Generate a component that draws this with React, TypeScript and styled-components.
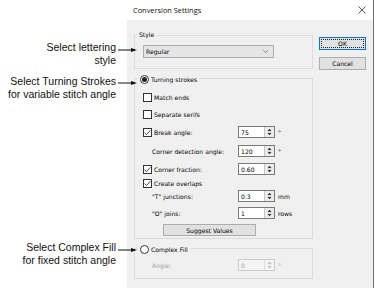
import React from "react";
import styled, { createGlobalStyle } from "styled-components";

const GlobalStyle = createGlobalStyle`
  * { box-sizing: border-box; }
  html, body { margin: 0; padding: 0; background: #fff; }
  body { width: 383px; height: 303px; overflow: hidden; }
`;

const Page = styled.div`
  display: flex;
  align-items: flex-start;
  width: 383px;
  height: 303px;
`;

const Callouts = styled.div`
  position: relative;
  z-index: 2;
  display: flex;
  flex-direction: column;
  flex-shrink: 0;
  width: 127px;
  padding-top: 41px;
`;

const Callout = styled.div<{ $mt: number }>`
  position: relative;
  width: 116px;
  margin-top: ${({ $mt }) => $mt}px;
  text-align: right;
  font-family: "Liberation Sans", Arial, sans-serif;
  font-size: 10.5px;
  line-height: 13px;
  color: #111;
`;

const Arrow = styled.svg<{ $y: number }>`
  position: absolute;
  left: 118px;
  top: ${({ $y }) => $y - 3}px;
`;

const Dialog = styled.div`
  display: flex;
  flex-direction: column;
  flex-shrink: 0;
  width: 247px;
  border-right: 1px solid #707070;
  font-family: "DejaVu Sans", Verdana, sans-serif;
  font-size: 6.1px;
  color: #000;
`;

const TitleBar = styled.div`
  display: flex;
  align-items: center;
  justify-content: space-between;
  height: 20px;
  padding: 0 7px 0 6px;
  background: #fff;
`;

const Title = styled.span`
  font-family: "Open Sans", "Noto Sans", sans-serif;
  font-size: 7.4px;
  color: #111;
`;

const Body = styled.div`
  display: flex;
  gap: 6px;
  height: 268px;
  padding: 15px 7px 0 7px;
  background: #f0f0f0;
`;

const MainCol = styled.div`
  display: flex;
  flex-direction: column;
  width: 179px;
`;

const ButtonCol = styled.div`
  display: flex;
  flex-direction: column;
  gap: 7px;
  width: 47px;
  margin-top: 2px;
`;

const GroupBox = styled.div<{ $mt: number; $pt: number; $pb: number }>`
  position: relative;
  display: flex;
  flex-direction: column;
  margin-top: ${({ $mt }) => $mt}px;
  padding: ${({ $pt }) => $pt}px 8px ${({ $pb }) => $pb}px 8px;
  border: 1px solid #dcdcdc;
`;

const Legend = styled.div<{ $top: number; $left: number }>`
  position: absolute;
  top: ${({ $top }) => $top}px;
  left: ${({ $left }) => $left}px;
  display: flex;
  align-items: center;
  gap: 2px;
  height: 9px;
  padding: 0 2px;
  background: #f0f0f0;
`;

const Combo = styled.div`
  display: flex;
  align-items: center;
  justify-content: space-between;
  width: 131px;
  height: 13px;
  padding: 0 5px 0 2px;
  border: 1px solid #adadad;
  background: #e5e5e5;
`;

const Row = styled.div<{ $mt: number }>`
  display: grid;
  grid-template-columns: 95px 37px auto;
  align-items: center;
  height: 12px;
  margin-top: ${({ $mt }) => $mt}px;
`;

const CheckLabel = styled.label`
  display: flex;
  align-items: center;
  gap: 2px;
  white-space: nowrap;
`;

const Box = styled.span`
  display: flex;
  align-items: center;
  justify-content: center;
  width: 9px;
  height: 9px;
  border: 1px solid #333;
  background: #fff;
`;

const Radio = styled.span<{ $on?: boolean }>`
  display: flex;
  align-items: center;
  justify-content: center;
  width: 9px;
  height: 9px;
  border: 1px solid #333;
  border-radius: 50%;
  background: #fff;
  &::after {
    content: "";
    display: ${({ $on }) => ($on ? "block" : "none")};
    width: 5px;
    height: 5px;
    border-radius: 50%;
    background: #222;
  }
`;

const FieldLabel = styled.span<{ $disabled?: boolean }>`
  padding-left: 9px;
  white-space: nowrap;
  color: ${({ $disabled }) => ($disabled ? "#a0a0a0" : "#000")};
`;

const Spin = styled.div<{ $disabled?: boolean }>`
  display: flex;
  width: 37px;
  height: 12px;
  border: 1px solid ${({ $disabled }) => ($disabled ? "#cccccc" : "#7a7a7a")};
  background: ${({ $disabled }) => ($disabled ? "#f4f4f4" : "#fff")};
  color: ${({ $disabled }) => ($disabled ? "#a0a0a0" : "#000")};
`;

const SpinValue = styled.span`
  display: flex;
  align-items: center;
  flex: 1;
  padding-left: 2px;
`;

const SpinButtons = styled.span<{ $disabled?: boolean }>`
  display: flex;
  align-items: center;
  justify-content: center;
  width: 10px;
  border-left: 1px solid ${({ $disabled }) => ($disabled ? "#dddddd" : "#c4c4c4")};
  background: ${({ $disabled }) => ($disabled ? "#f4f4f4" : "#ececec")};
`;

const Unit = styled.span<{ $disabled?: boolean }>`
  padding-left: 3px;
  color: ${({ $disabled }) => ($disabled ? "#a0a0a0" : "#000")};
`;

const Button = styled.button<{ $primary?: boolean }>`
  display: flex;
  align-items: center;
  justify-content: center;
  height: 13px;
  padding: 0;
  border: 1px solid ${({ $primary }) => ($primary ? "#0078d7" : "#adadad")};
  background: #e1e1e1;
  font-family: inherit;
  font-size: 6.1px;
  color: #000;
  outline: ${({ $primary }) => ($primary ? "1px dotted #222" : "none")};
  outline-offset: -3px;
`;

const SuggestButton = styled(Button)`
  width: 93px;
  height: 12px;
  margin: 5px 0 0 20px;
`;

const Check = () => (
  <svg width="7" height="7" viewBox="0 0 7 7">
    <polyline points="0.6,3.6 2.6,5.6 6.4,1.2" fill="none" stroke="#333" strokeWidth="0.9" />
  </svg>
);

const SpinArrows = ({ disabled }: { disabled?: boolean }) => (
  <svg width="5" height="8" viewBox="0 0 5 8">
    <polygon points="2.5,0.8 4.5,3 0.5,3" fill={disabled ? "#bbb" : "#333"} />
    <line x1="0.5" y1="4" x2="4.5" y2="4" stroke={disabled ? "#ddd" : "#bbb"} strokeWidth="0.6" />
    <polygon points="0.5,5 4.5,5 2.5,7.2" fill={disabled ? "#bbb" : "#333"} />
  </svg>
);

const CallArrow = ({ y }: { y: number }) => (
  <Arrow $y={y} width="20" height="6" viewBox="0 0 20 6">
    <line x1="0" y1="3" x2="15" y2="3" stroke="#111" strokeWidth="1" />
    <polygon points="13,1 19,3 13,5" fill="#111" />
  </Arrow>
);

interface SpinFieldProps {
  value: string;
  unit?: string;
  disabled?: boolean;
}

const SpinField: React.FC<SpinFieldProps> = ({ value, unit, disabled }) => (
  <>
    <Spin $disabled={disabled}>
      <SpinValue>{value}</SpinValue>
      <SpinButtons $disabled={disabled}>
        <SpinArrows disabled={disabled} />
      </SpinButtons>
    </Spin>
    <Unit $disabled={disabled}>{unit}</Unit>
  </>
);

const CheckItem = ({ label, checked }: { label: string; checked?: boolean }) => (
  <CheckLabel>
    <Box>{checked && <Check />}</Box>
    {label}
  </CheckLabel>
);

export default function App() {
  return (
    <Page>
      <GlobalStyle />
      <Callouts>
        <Callout $mt={0}>
          Select lettering
          <br />
          style
          <CallArrow y={9} />
        </Callout>
        <Callout $mt={8}>
          Select Turning Strokes
          <br />
          for variable stitch angle
          <CallArrow y={8} />
        </Callout>
        <Callout $mt={140}>
          Select Complex Fill
          <br />
          for fixed stitch angle
          <CallArrow y={9} />
        </Callout>
      </Callouts>

      <Dialog>
        <TitleBar>
          <Title>Conversion Settings</Title>
          <svg width="8" height="8" viewBox="0 0 8 8">
            <line x1="0.5" y1="0.5" x2="7.5" y2="7.5" stroke="#333" strokeWidth="0.8" />
            <line x1="7.5" y1="0.5" x2="0.5" y2="7.5" stroke="#333" strokeWidth="0.8" />
          </svg>
        </TitleBar>

        <Body>
          <MainCol>
            <GroupBox $mt={0} $pt={9} $pb={10}>
              <Legend $top={-6} $left={2}>Style</Legend>
              <Combo>
                <span>Regular</span>
                <svg width="5" height="3" viewBox="0 0 5 3">
                  <polyline points="0.3,0.3 2.5,2.5 4.7,0.3" fill="none" stroke="#555" strokeWidth="0.7" />
                </svg>
              </Combo>
            </GroupBox>

            <GroupBox $mt={9} $pt={12} $pb={2}>
              <Legend $top={-4} $left={3}>
                <Radio $on />
                Turning strokes
              </Legend>
              <Row $mt={0}>
                <CheckItem label="Match ends" />
              </Row>
              <Row $mt={5}>
                <CheckItem label="Separate serifs" />
              </Row>
              <Row $mt={6}>
                <CheckItem label="Break angle:" checked />
                <SpinField value="75" unit="°" />
              </Row>
              <Row $mt={7}>
                <FieldLabel>Corner detection angle:</FieldLabel>
                <SpinField value="120" unit="°" />
              </Row>
              <Row $mt={6}>
                <CheckItem label="Corner fraction:" checked />
                <SpinField value="0.60" />
              </Row>
              <Row $mt={2}>
                <CheckItem label="Create overlaps" checked />
              </Row>
              <Row $mt={1}>
                <FieldLabel>"T" junctions:</FieldLabel>
                <SpinField value="0.3" unit="mm" />
              </Row>
              <Row $mt={5}>
                <FieldLabel>"O" joins:</FieldLabel>
                <SpinField value="1" unit="rows" />
              </Row>
              <SuggestButton>Suggest Values</SuggestButton>
            </GroupBox>

            <GroupBox $mt={9} $pt={10} $pb={7}>
              <Legend $top={-4} $left={3}>
                <Radio />
                Complex Fill
              </Legend>
              <Row $mt={0}>
                <FieldLabel $disabled>Angle:</FieldLabel>
                <SpinField value="0" unit="°" disabled />
              </Row>
            </GroupBox>
          </MainCol>

          <ButtonCol>
            <Button $primary>OK</Button>
            <Button>Cancel</Button>
          </ButtonCol>
        </Body>
      </Dialog>
    </Page>
  );
}
